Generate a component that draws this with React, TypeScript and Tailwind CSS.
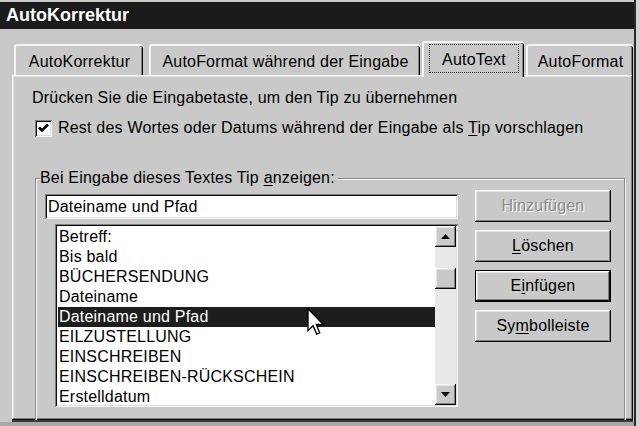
import React from "react";

const raised =
  "shadow-[inset_-1px_-1px_0_#0a0a0a,inset_1px_1px_0_#fafafa,inset_-2px_-2px_0_#7f7f7f,inset_2px_2px_0_#e3e3e3]";
const sunken =
  "shadow-[inset_1px_1px_0_#7f7f7f,inset_-1px_-1px_0_#fafafa,inset_2px_2px_0_#0a0a0a,inset_-2px_-2px_0_#dcdcdc]";

function Tri({ down }: { down?: boolean }) {
  return (
    <svg width="9" height="5" viewBox="0 0 9 5">
      {down ? (
        <polygon points="0,0 9,0 4.5,5" fill="#000" />
      ) : (
        <polygon points="0,5 9,5 4.5,0" fill="#000" />
      )}
    </svg>
  );
}

const items = [
  "Betreff:",
  "Bis bald",
  "BÜCHERSENDUNG",
  "Dateiname",
  "Dateiname und Pfad",
  "EILZUSTELLUNG",
  "EINSCHREIBEN",
  "EINSCHREIBEN-RÜCKSCHEIN",
  "Erstelldatum",
];

function Tab({ label, w }: { label: string; w: string }) {
  return (
    <div
      className={`${w} h-[31px] ml-[2px] rounded-t-[3px] bg-[#c9c9c9] border-t-2 border-l-2 border-[#f6f6f6] shadow-[inset_-1px_0_0_#0a0a0a,inset_-2px_0_0_#7f7f7f] flex items-center justify-center pt-[3px]`}
    >
      {label}
    </div>
  );
}

export default function App() {
  return (
    <div className="relative w-[640px] h-[426px] overflow-hidden bg-[#d4d4d4] font-['Liberation_Sans',Arial,sans-serif] text-[16px] tracking-[0.2px] text-black">
      <div className="w-[636px] h-full bg-[#c9c9c9] border-r-2 border-[#2a2a2a] pt-[2px] flex flex-col">
        {/* title bar */}
        <div className="h-[27px] bg-[#1b1b1b] text-white font-bold text-[18px] tracking-[0px] pl-[6px] flex items-center">
          AutoKorrektur
        </div>

        {/* body */}
        <div className="pt-[12px] pl-[12px] pr-[1px] flex flex-col">
          {/* tabs */}
          <div className="flex items-end h-[34px]">
            <Tab label="AutoKorrektur" w="w-[129px]" />
            <div className="w-[4px]" />
            <Tab label="AutoFormat während der Eingabe" w="w-[271px]" />
            <div className="relative z-10 w-[102px] h-[36px] -mb-[2px] ml-[2px] rounded-t-[3px] bg-[#c9c9c9] border-t-2 border-l-2 border-[#f6f6f6] shadow-[inset_-1px_0_0_#0a0a0a,inset_-2px_0_0_#7f7f7f] px-[5px] pt-[1px] pb-[4px] flex">
              <div className="flex-1 border border-dotted border-[#222] flex items-center justify-center pt-[2px]">
                AutoText
              </div>
            </div>
            <Tab label="AutoFormat" w="w-[107px]" />
          </div>

          {/* panel */}
          <div className="relative h-[345px] overflow-hidden bg-[#c9c9c9] shadow-[inset_-1px_-1px_0_#0a0a0a,inset_1px_1px_0_#f6f6f6,inset_-2px_-2px_0_#7f7f7f,inset_2px_2px_0_#e3e3e3] pt-[13px] pl-[20px] flex flex-col">
            <div className="leading-[20px]">
              Drücken Sie die Eingabetaste, um den Tip zu übernehmen
            </div>
            <div className="mt-[10px] flex items-center h-[20px] ml-[3px]">
              <div className={`w-[17px] h-[17px] bg-white ${sunken} flex items-center justify-center`}>
                <svg width="11" height="10" viewBox="0 0 11 10">
                  <path d="M1 4.5 L4 7.5 L10 1.5" stroke="#000" strokeWidth="2.6" fill="none" />
                </svg>
              </div>
              <span className="ml-[6px]">
                Rest des Wortes oder Datums während der Eingabe als{" "}
                <span className="underline underline-offset-2">T</span>ip vorschlagen
              </span>
            </div>

            <fieldset className="shrink-0 mt-[31px] ml-[3px] mr-[8px] h-[270px] border border-[#8c8c8c] shadow-[1px_1px_0_#f6f6f6,inset_1px_1px_0_#f6f6f6] pl-[9px] pr-[13px] flex">
              <legend className="-ml-[5px] pr-[2px] leading-[18px] bg-[#c9c9c9]">
                Bei Eingabe dieses Textes Tip <span className="underline underline-offset-2">a</span>nzeigen:
              </legend>
              <div className="flex w-full items-start">
                <div className="w-[413px] mt-[7px] flex flex-col">
                  <div className={`h-[25px] bg-white ${sunken} pl-[3px] flex items-center`}>
                    Dateiname und Pfad
                  </div>
                  <div className={`mt-[5px] ml-[10px] h-[183px] bg-white ${sunken} p-[2px] flex`}>
                    <div className="flex-1 pl-[1px] pt-[1px] overflow-hidden">
                      {items.map((t, i) => (
                        <div
                          key={t}
                          className={`h-[20px] leading-[20px] pl-[1px] ${
                            i === 4 ? "bg-[#1d1d1d] text-white" : ""
                          }`}
                        >
                          {t}
                        </div>
                      ))}
                    </div>
                    <div className="w-[21px] flex flex-col bg-[#e8e8e8]">
                      <div className={`h-[21px] bg-[#c9c9c9] ${raised} flex items-center justify-center`}>
                        <Tri />
                      </div>
                      <div className="h-[21px]" />
                      <div className={`h-[21px] bg-[#c9c9c9] ${raised}`} />
                      <div className="flex-1" />
                      <div className={`h-[21px] bg-[#c9c9c9] ${raised} flex items-center justify-center`}>
                        <Tri down />
                      </div>
                    </div>
                  </div>
                </div>

                <div className="ml-[17px] mt-[3px] w-[136px] flex flex-col gap-[8px]">
                  <div className={`h-[32px] ${raised} flex items-center justify-center text-[#8c8c8c] [text-shadow:1px_1px_0_#ffffff]`}>
                    Hinzufügen
                  </div>
                  <div className={`h-[32px] ${raised} flex items-center justify-center`}>
                    <span>
                      <span className="underline underline-offset-2">L</span>öschen
                    </span>
                  </div>
                  <div className="h-[32px] border border-black flex">
                    <div className={`flex-1 ${raised} flex items-center justify-center`}>
                      <span>
                        E<span className="underline underline-offset-2">i</span>nfügen
                      </span>
                    </div>
                  </div>
                  <div className={`h-[32px] ${raised} flex items-center justify-center`}>
                    <span>
                      Sy<span className="underline underline-offset-2">m</span>bolleiste
                    </span>
                  </div>
                </div>
              </div>
            </fieldset>
          </div>
          <div className="h-[2px] bg-[#3a3a3a]" />
        </div>
        <div className="flex-1 bg-[#a8a8a8]" />
      </div>

      {/* mouse cursor */}
      <svg
        className="absolute left-[307px] top-[308px]"
        width="18"
        height="28"
        viewBox="0 0 13 21"
      >
        <path
          d="M0.5 0.5 L0.5 17 L4.3 13.3 L7 19.6 L9.3 18.6 L6.7 12.4 L12 12.4 Z"
          fill="#fff"
          stroke="#000"
          strokeWidth="1"
          strokeLinejoin="miter"
        />
      </svg>
    </div>
  );
}
